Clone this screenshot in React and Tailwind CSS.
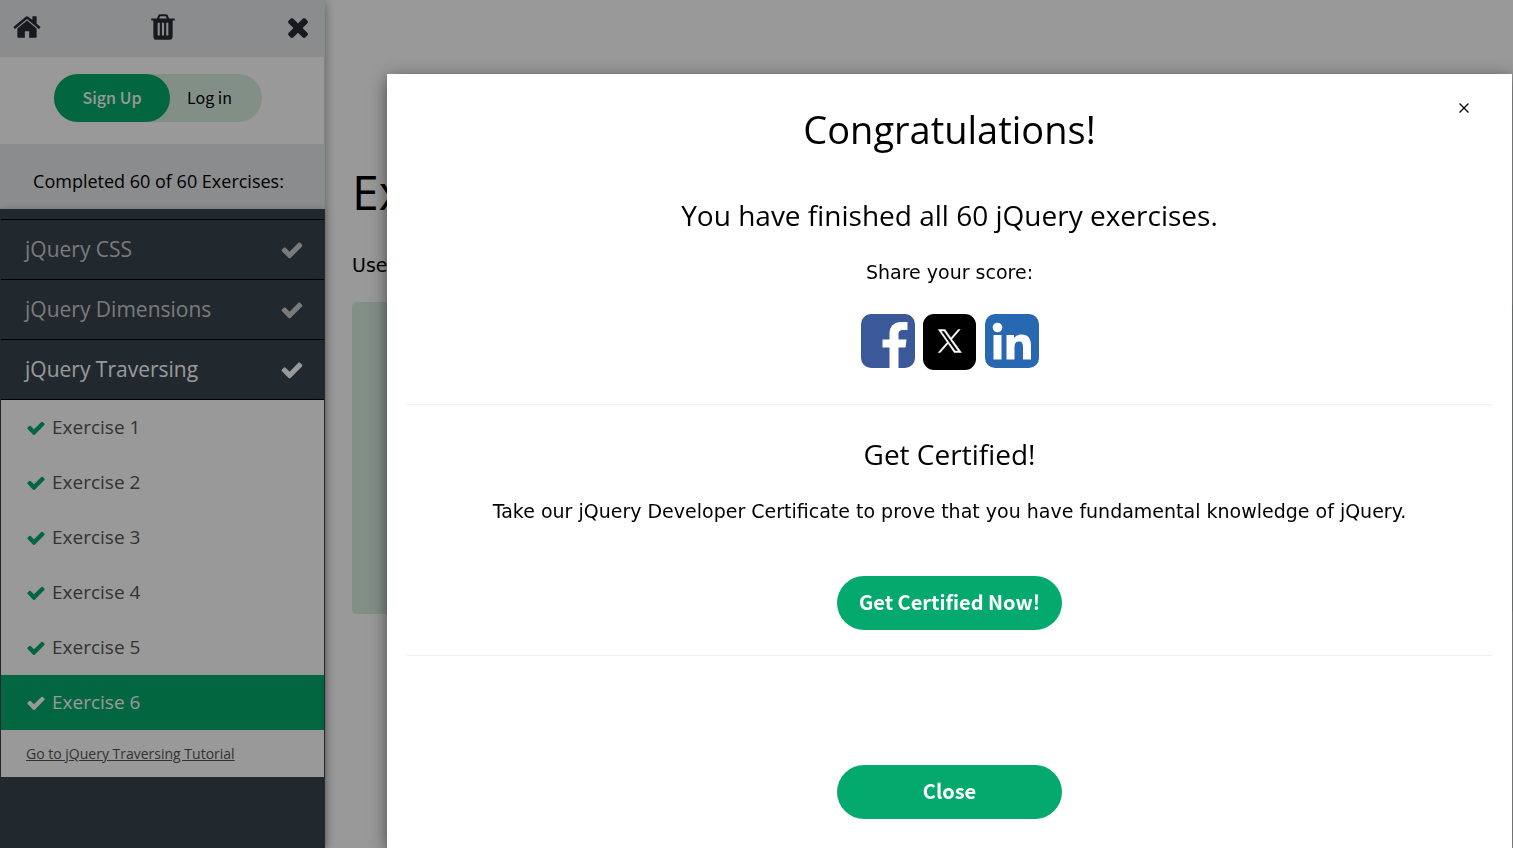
import React from "react";

const CHECK =
  "M1671 566q0 40-28 68l-724 724-136 136q-28 28-68 28t-68-28l-136-136-362-362q-28-28-28-68t28-68l136-136q28-28 68-28t68 28l294 295 656-657q28-28 68-28t68 28l136 136q28 28 28 68z";
const TIMES =
  "M1490 1322q0 40-28 68l-136 136q-28 28-68 28t-68-28l-294-294-294 294q-28 28-68 28t-68-28l-136-136q-28-28-28-68t28-68l294-294-294-294q-28-28-28-68t28-68l136-136q28-28 68-28t68 28l294 294 294-294q28-28 68-28t68 28l136 136q28 28 28 68t-28 68l-294 294 294 294q28 28 28 68z";
const HOME =
  "M1472 992v480q0 26-19 45t-45 19h-384v-384h-256v384h-384q-26 0-45-19t-19-45v-480q0-1 .5-3t.5-3l575-474 575 474q1 2 1 6zm223-69l-62 74q-8 9-21 11h-3q-13 0-21-7l-692-577-692 577q-12 8-24 7-13-2-21-11l-62-74q-8-10-7-23.5t11-21.5l719-599q32-26 76-26t76 26l244 204v-195q0-14 9-23t23-9h192q14 0 23 9t9 23v408l219 182q10 8 11 21.5t-7 23.5z";
const TRASH =
  "M704 1376v-704q0-14-9-23t-23-9h-64q-14 0-23 9t-9 23v704q0 14 9 23t23 9h64q14 0 23-9t9-23zm256 0v-704q0-14-9-23t-23-9h-64q-14 0-23 9t-9 23v704q0 14 9 23t23 9h64q14 0 23-9t9-23zm256 0v-704q0-14-9-23t-23-9h-64q-14 0-23 9t-9 23v704q0 14 9 23t23 9h64q14 0 23-9t9-23zm-544-992h448l-48-117q-7-9-17-11h-317q-10 2-17 11zm928 32v64q0 14-9 23t-23 9h-96v948q0 83-47 143.5t-113 60.5h-832q-66 0-113-58.5t-47-141.5v-952h-96q-14 0-23-9t-9-23v-64q0-14 9-23t23-9h309l70-167q15-37 54-63t79-26h320q40 0 79 26t54 63l70 167h309q14 0 23 9t9 23z";

function Glyph({ d, className }) {
  return (
    <svg viewBox="0 0 1792 1792" fill="currentColor" aria-hidden="true" className={className}>
      <path d={d} />
    </svg>
  );
}

const topics = [
  { name: "jQuery CSS", active: false },
  { name: "jQuery Dimensions", active: false },
  { name: "jQuery Traversing", active: true },
];

const exercises = [1, 2, 3, 4, 5, 6];

function Sidebar() {
  return (
    <aside className="z-10 flex w-[325px] shrink-0 flex-col bg-[#38444d] shadow-[0_2px_10px_rgba(0,0,0,0.4)]">
      <div className="flex h-[57px] items-center justify-between bg-[#e7e9eb] px-3 pb-[3px] text-[#282a35]">
        <a href="#home" aria-label="Home">
          <Glyph d={HOME} className="size-[30px]" />
        </a>
        <button type="button" aria-label="Reset progress">
          <Glyph d={TRASH} className="size-[30px]" />
        </button>
        <button type="button" aria-label="Close menu">
          <Glyph d={TIMES} className="size-[30px]" />
        </button>
      </div>
      <div className="h-[87px] border-r border-[#dddddd] bg-white pt-[17px] pl-[54px]">
        <div className="flex h-12 w-52 rounded-full bg-[#d9eee1] font-['Noto_Sans_CJK_JP',sans-serif] text-base">
          <a href="#signup" className="flex w-[116px] items-center justify-center rounded-full bg-[#04aa6d] pb-0.5 font-medium text-white">
            Sign Up
          </a>
          <a href="#login" className="flex items-center pb-0.5 pl-[17px]">
            Log in
          </a>
        </div>
      </div>
      <div className="flex h-[65px] items-center justify-center bg-[#e7e9eb] pt-2.5 pr-2 text-[18px]">
        Completed 60 of 60 Exercises:
      </div>
      <nav className="flex-1 bg-[#38444d] px-px pt-2.5 shadow-[0_0_6px_rgba(0,0,0,0.2)]">
        {topics.map((t) => (
          <a
            key={t.name}
            href="#topic"
            className={
              "flex h-[60px] items-center justify-between border-t border-black pr-5 pl-6 text-[21px] " +
              (t.active ? "text-white" : "text-[#cccccc]")
            }
          >
            {t.name}
            <Glyph d={CHECK} className="size-6" />
          </a>
        ))}
        <div className="border-t border-black bg-white">
          {exercises.map((n) => (
            <a
              key={n}
              href="#exercise"
              className={
                "flex h-[55px] items-center gap-1.5 pl-[25px] text-[19px] " +
                (n === 6 ? "bg-[#04aa6d] text-white" : "text-[#555555]")
              }
            >
              <Glyph d={CHECK} className={n === 6 ? "size-5" : "size-5 text-[#04aa6d]"} />
              Exercise {n}
            </a>
          ))}
          <a href="#tutorial" className="flex h-[47px] items-center pl-[25px] text-[14px] text-[#555555] underline">
            Go to jQuery Traversing Tutorial
          </a>
        </div>
      </nav>
    </aside>
  );
}

function SocialLinks() {
  return (
    <div className="flex justify-center gap-2">
      <a href="#facebook" aria-label="Share on Facebook">
        <svg viewBox="0 0 54 54" className="h-14 w-[54px] pb-0.5">
          <rect width="54" height="54" rx="10" fill="#3b5998" />
          <path
            d="M28.500 54V33.500H21.500V25.500H28.500V20C28.500 12 33 8 40.500 8H46.500V16H42C38.500 16 37.500 17.500 37.500 20.500V25.500H45.500L44.500 33.500H37.500V54Z"
            fill="#fff"
          />
        </svg>
      </a>
      <a href="#x" aria-label="Share on X">
        <svg viewBox="0 0 54 56" className="h-14 w-[54px]">
          <rect x="0" width="53" height="56" rx="11" fill="#000" />
          <g transform="translate(14.500 15)">
            <path
              d="M14.300 10.200L22.700 0.500H20.700L13.400 8.900L7.600 0.500H0.800L9.700 13.300L0.800 23.500H2.800L10.600 14.500L16.700 23.500H24ZM11.500 13.400L10.600 12.100L3.500 2H6.600L12.400 10.200L13.300 11.500L20.800 22.100H17.700Z"
              fill="#fff"
              stroke="#fff"
              strokeWidth="0.500"
            />
          </g>
        </svg>
      </a>
      <a href="#linkedin" aria-label="Share on LinkedIn">
        <svg viewBox="0 0 54 54" className="h-14 w-[54px] pb-0.5">
          <rect width="54" height="54" rx="10" fill="#2867b2" />
          <g fill="#fff">
            <circle cx="12.500" cy="13.500" r="4.800" />
            <path d="M8.500 21H16.500V45.500H8.500Z" />
            <path d="M21.500 21H29V24.500C30.500 22 33 20.400 36.500 20.400C43.500 20.400 46 25 46 31.500V45.500H38V33C38 29.500 37 27.500 34 27.500C31 27.500 29.500 29.500 29.500 33V45.500H21.500Z" />
          </g>
        </svg>
      </a>
    </div>
  );
}

const pill =
  "flex h-[54px] w-[225px] items-center justify-center rounded-full bg-[#04aa6d] pb-0.5 font-['Noto_Sans_CJK_JP',sans-serif] text-[20px] font-bold text-white";

function Modal() {
  return (
    <div className="fixed inset-0 z-20 flex overflow-hidden bg-black/40 pt-[74px] pr-px pl-[387px]">
      <section
        role="dialog"
        aria-modal="true"
        aria-labelledby="modal-title"
        className="relative flex-1 bg-white px-5 text-center shadow-[0_4px_10px_rgba(0,0,0,0.2),0_4px_20px_rgba(0,0,0,0.4)]"
      >
        <button type="button" aria-label="Close dialog" className="absolute top-6 right-[38px] flex size-5 items-center justify-center">
          <svg viewBox="0 0 10 10" className="size-2.5" stroke="#000" strokeWidth="1.2" aria-hidden="true">
            <path d="M0.500 0.500L9.500 9.500M9.500 0.500L0.500 9.500" />
          </svg>
        </button>
        <h1 id="modal-title" className="pt-[26px] text-[38px] leading-[58px]">
          Congratulations!
        </h1>
        <h2 className="mt-8 text-[28px] leading-[50px]">You have finished all 60 jQuery exercises.</h2>
        <p className="mt-[17px] mb-[26px] font-['DejaVu_Sans',sans-serif] text-[19px] leading-[31px]">Share your score:</p>
        <SocialLinks />
        <hr className="mt-[34px] border-[#eeeeee]" />
        <h2 className="mt-6 text-[28px] leading-[50px]">Get Certified!</h2>
        <p className="mt-[17px] mb-[49px] font-['DejaVu_Sans',sans-serif] text-[19px] leading-[31px]">
          Take our jQuery Developer Certificate to prove that you have fundamental knowledge of jQuery.
        </p>
        <div className="flex justify-center">
          <a href="#certified" className={pill}>
            Get Certified Now!
          </a>
        </div>
        <hr className="mt-[25px] border-[#eeeeee]" />
        <div className="mt-[109px] flex justify-center">
          <button type="button" className={pill}>
            Close
          </button>
        </div>
      </section>
    </div>
  );
}

export default function App() {
  return (
    <div className="flex min-h-screen bg-white font-['Open_Sans','Noto_Sans',sans-serif] text-black">
      <Sidebar />
      <main className="flex-1 overflow-hidden pt-[156px] pl-[27px]">
        <h1 className="text-[48px] leading-[72px]">Exercise</h1>
        <p className="mt-[22px] font-['DejaVu_Sans',sans-serif] text-[19px] leading-[30px]">Use</p>
        <div className="mt-[22px] h-[312px] rounded-[5px] bg-[#d9eee1]" />
      </main>
      <Modal />
    </div>
  );
}
